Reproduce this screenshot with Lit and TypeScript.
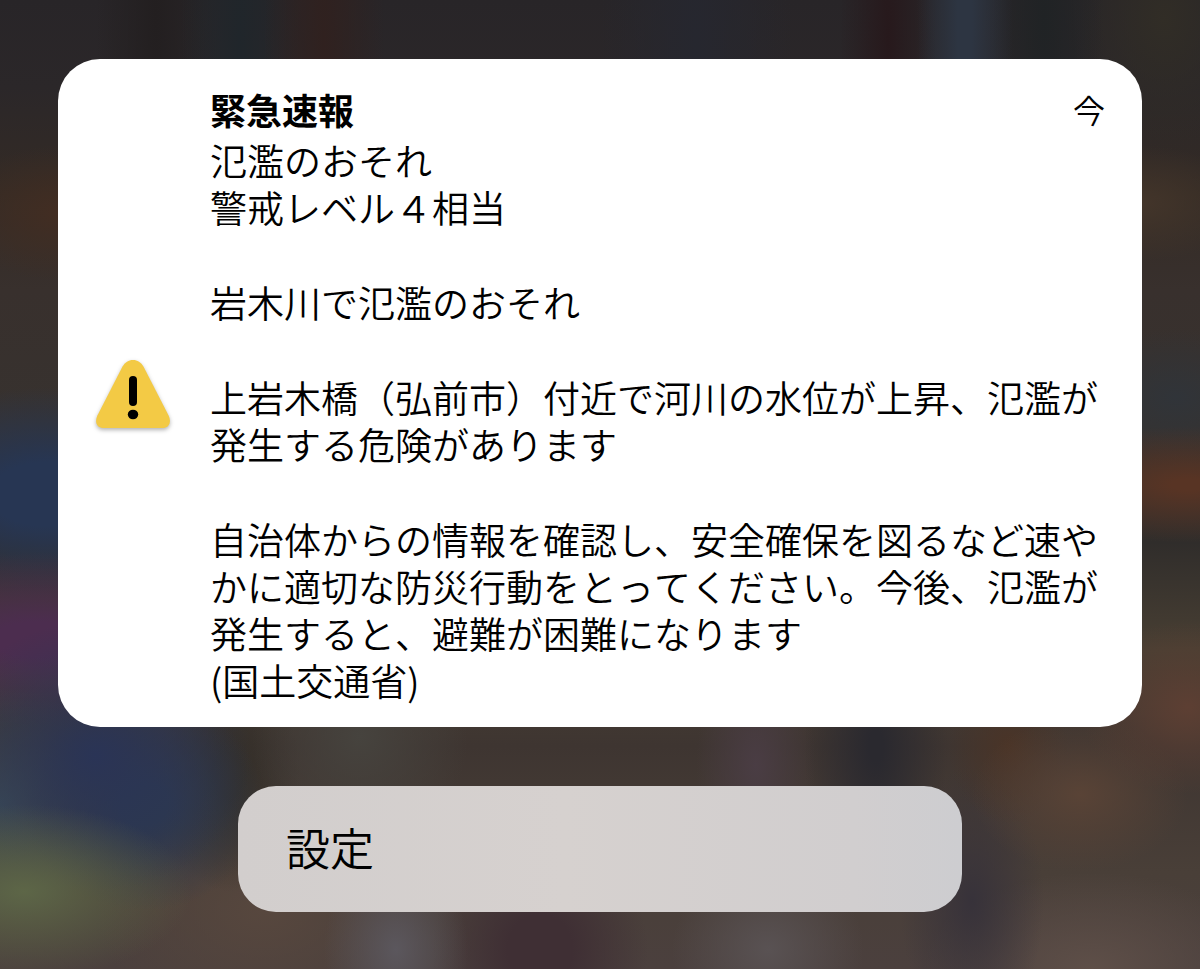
import { LitElement, html, css } from "lit";
import { customElement } from "lit/decorators.js";

@customElement("warning-icon")
class WarningIcon extends LitElement {
  static styles = css`
    :host {
      display: block;
      width: 76px;
      height: 76px;
    }
    .glyph {
      display: block;
      width: 100%;
      height: 100%;
      overflow: visible;
      filter: drop-shadow(0 2px 2px rgba(0, 0, 0, 0.3));
    }
  `;

  render() {
    return html`
      <svg class="glyph" viewBox="0 0 76 76" role="img" aria-label="警告">
        <path
          fill="#f3ca45"
          d="M38 3 C42.5 3 46 5.200 48.600 9.800 L73.600 58.500 C76.800 65.500 74 71 67 71 L9 71 C2 71 -0.800 65.500 2.400 58.500 L27.400 9.800 C30 5.200 33.500 3 38 3 Z"
        />
        <rect x="34" y="19" width="8" height="30" rx="4" />
        <ellipse cx="38" cy="57.500" rx="5.200" ry="4.800" />
      </svg>
    `;
  }
}

@customElement("emergency-alert")
class EmergencyAlert extends LitElement {
  static styles = css`
    :host {
      display: block;
    }
    .card {
      display: grid;
      grid-template-columns: auto minmax(0, 1fr);
      align-items: center;
      column-gap: 39px;
      padding: 26px 37px 23px;
      border-radius: 42px;
      background: #fff;
      color: #000;
    }
    .head {
      display: flex;
      align-items: center;
      justify-content: space-between;
      margin-bottom: 4px;
    }
    .title {
      margin: 0;
      font-size: 36px;
      line-height: 48px;
      font-weight: 700;
    }
    .time {
      font-size: 32px;
      line-height: 48px;
      font-weight: 350;
    }
    .message {
      margin: 0 0 48px;
      font-size: 37px;
      line-height: 47px;
      font-weight: 350;
      font-kerning: none;
      line-break: anywhere;
    }
    .message:last-child {
      margin-bottom: 0;
    }
  `;

  render() {
    return html`
      <article class="card">
        <warning-icon></warning-icon>
        <div>
          <header class="head">
            <h1 class="title">緊急速報</h1>
            <time class="time">今</time>
          </header>
          <p class="message">氾濫のおそれ<br />警戒レベル４相当</p>
          <p class="message">岩木川で氾濫のおそれ</p>
          <p class="message">上岩木橋（弘前市）付近で河川の水位が上昇、氾濫が発生する危険があります</p>
          <p class="message">自治体からの情報を確認し、安全確保を図るなど速やかに適切な防災行動をとってください。今後、氾濫が発生すると、避難が困難になります<br />(国土交通省)</p>
        </div>
      </article>
    `;
  }
}

@customElement("app-root")
class AppRoot extends LitElement {
  static styles = css`
    :host {
      display: block;
      font-family: "Noto Sans CJK JP", sans-serif;
    }
    .screen {
      box-sizing: border-box;
      min-height: 100vh;
      padding: 59px 58px 56px;
      background:
        radial-gradient(ellipse 4% 50% at 80.4% 2%, #2d3542 15%, transparent),
        radial-gradient(ellipse 4% 50% at 74% 4%, #27191c, transparent),
        radial-gradient(ellipse 5% 50% at 27% 4%, #30211f, transparent),
        radial-gradient(ellipse 5% 50% at 20% 4%, #20262b, transparent),
        radial-gradient(ellipse 5% 50% at 13% 2%, #231f20, transparent),
        radial-gradient(ellipse 8% 50% at 58% 4%, #26272f, transparent),
        radial-gradient(ellipse 5% 30% at 87% 2%, #202325, transparent),
        radial-gradient(ellipse 8% 14% at 97% 2%, #312d26, transparent),
        radial-gradient(ellipse 14% 9% at 2% 92%, #5d6647, transparent),
        radial-gradient(ellipse 13% 14% at 8% 78%, #2a3456, transparent),
        radial-gradient(ellipse 10% 11% at 12% 83%, #2d394e 20%, transparent),
        radial-gradient(ellipse 10% 12% at 0% 83%, #3b4a55, transparent),
        radial-gradient(ellipse 18% 9% at 3% 66%, #4c2d4f 20%, transparent),
        radial-gradient(ellipse 16% 11% at 4% 51%, #273653 30%, transparent),
        radial-gradient(ellipse 9% 7% at 5% 22%, #422d22, transparent),
        radial-gradient(ellipse 14% 6% at 99% 50%, #583424 10%, transparent),
        radial-gradient(ellipse 9% 6% at 95% 21%, #43352a, transparent),
        radial-gradient(ellipse 9% 7% at 98% 41%, #303439, transparent),
        radial-gradient(ellipse 9% 9% at 99% 73%, #5d3f33, transparent),
        radial-gradient(ellipse 9% 8% at 90% 82%, #594336, transparent),
        radial-gradient(ellipse 5% 8% at 84% 77%, #4a3427, transparent),
        radial-gradient(ellipse 6% 16% at 73% 77%, #2a292f 10%, transparent),
        radial-gradient(ellipse 5% 12% at 63% 79%, #4a3d44, transparent),
        radial-gradient(ellipse 9% 12% at 30% 76%, #46433e, transparent),
        radial-gradient(ellipse 6% 12% at 19% 80%, #342f29 20%, transparent),
        radial-gradient(ellipse 6% 10% at 33% 98%, #5b575d, transparent),
        radial-gradient(ellipse 9% 12% at 45% 98%, #3f2f34 30%, transparent),
        radial-gradient(ellipse 8% 9% at 64% 98%, #595253, transparent),
        radial-gradient(ellipse 6% 14% at 81% 93%, #37323a, transparent),
        radial-gradient(ellipse 14% 10% at 91% 100%, #5e4f48, transparent),
        radial-gradient(ellipse 14% 12% at 22% 94%, #57473e, transparent),
        linear-gradient(
          #282528 0%,
          #2b2729 9%,
          #342b25 20%,
          #38302d 30%,
          #37322f 44%,
          #302d2b 56%,
          #483f33 67%,
          #3e3531 77%,
          #493f38 90%,
          #4b403e 100%
        );
    }
    .settings {
      display: block;
      box-sizing: border-box;
      width: 100%;
      max-width: 724px;
      margin: 59px auto 0;
      padding: 29px 48px 33px;
      border: 0;
      border-radius: 38px;
      background: linear-gradient(90deg, #d2cecd, #d6d1cf 45%, #d1cecf 85%, #cdcdd0);
      color: #000;
      font: inherit;
      font-size: 44px;
      line-height: 64px;
      font-weight: 350;
      text-align: left;
      cursor: pointer;
    }
  `;

  render() {
    return html`
      <main class="screen">
        <emergency-alert></emergency-alert>
        <button class="settings" type="button">設定</button>
      </main>
    `;
  }
}
